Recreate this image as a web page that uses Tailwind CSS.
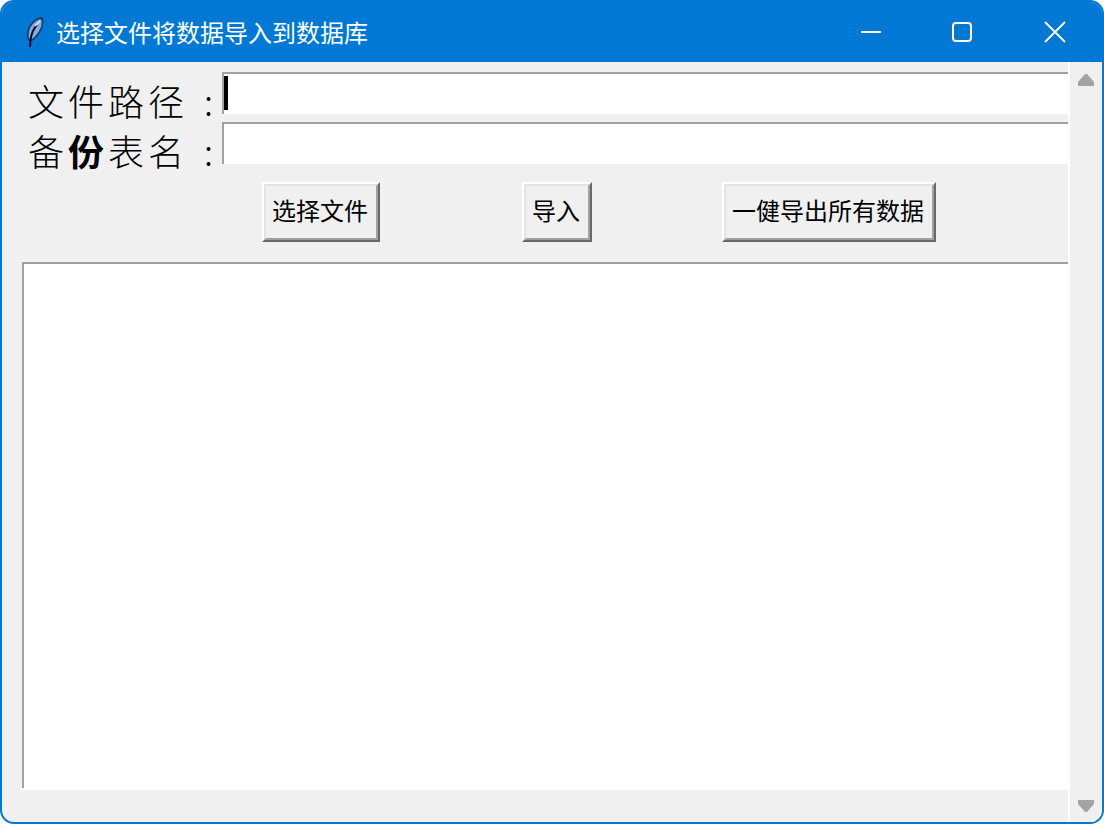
<!DOCTYPE html>
<html lang="zh-CN">
<head>
<meta charset="utf-8">
<script src="https://cdn.jsdelivr.net/npm/@tailwindcss/browser@4"></script>
<title>选择文件将数据导入到数据库</title>
</head>
<body class="bg-white m-0 font-['Noto_Sans_CJK_SC','Noto_Sans',sans-serif]">
<div class="w-[1104px] h-[824px] flex flex-col rounded-[14px] overflow-hidden border-2 border-[#0078d4] bg-[#f0f0f0]">
  <!-- title bar -->
  <header class="h-[60px] -mt-[2px] pt-[2px] box-content bg-[#0078d4] flex items-center text-white shrink-0">
    <svg class="ml-[20px] w-[24px] h-[32px] shrink-0 -mt-[1px]" viewBox="0 0 24 32">
      <path d="M6.5 25 C2.5 18 6 7 16 2 C22 -1 22 4 21 9 C19.5 16 15 22 10 25 Z" fill="#1d3a66"/>
      <path d="M7.5 23 C5 17 8 8 16 4 C20 2 20 5 19.5 9 C18 15 14 20 10 23 Z" fill="#86a8e2"/>
      <path d="M15 9 C12 12 9.5 17 8.5 24 L8 31" fill="none" stroke="#06101f" stroke-width="2"/>
      <path d="M13 10 C15 8 17 6 18 5" stroke="#dbe6f8" stroke-width="1.6" fill="none"/>
    </svg>
    <h1 class="ml-[10px] -mt-[1px] text-[24px] leading-none font-normal whitespace-nowrap">选择文件将数据导入到数据库</h1>
    <div class="ml-auto flex items-center h-full">
      <svg class="w-[20px] h-[20px] mr-[71px] -mt-[1px]" viewBox="0 0 20 20"><rect x="0" y="9" width="20" height="2" fill="#fff"/></svg>
      <svg class="w-[20px] h-[20px] mr-[72px] -mt-[1px]" viewBox="0 0 20 20"><rect x="1" y="1" width="18" height="18" rx="3" fill="none" stroke="#fff" stroke-width="2"/></svg>
      <svg class="w-[22px] h-[22px] mr-[36px] -mt-[1px]" viewBox="0 0 22 22"><path d="M1 1 L21 21 M21 1 L1 21" stroke="#fff" stroke-width="1.8" fill="none"/></svg>
    </div>
  </header>

  <div class="flex-1 flex min-h-0">
    <!-- main column -->
    <main class="w-[1066px] shrink-0 flex flex-col pt-[10px]">
      <div class="flex h-[42px]">
        <label class="w-[220px] shrink-0 pl-[26px] text-[36px] leading-[56px] h-[42px] font-light tracking-[4px] whitespace-nowrap text-black">文件路径<span class="ml-[16px]">:</span></label>
        <div class="flex-1 bg-white border-t-2 border-l-2 border-[#a0a0a0] pt-[2px]">
          <div class="w-[4px] h-[34px] bg-black"></div>
        </div>
      </div>
      <div class="flex h-[42px] mt-[8px]">
        <label class="w-[220px] shrink-0 pl-[26px] text-[36px] leading-[56px] h-[42px] font-light tracking-[4px] whitespace-nowrap text-black">备<span class="font-bold">份</span>表名<span class="ml-[16px]">:</span></label>
        <div class="flex-1 bg-white border-t-2 border-l-2 border-[#a0a0a0]"></div>
      </div>
      <div class="flex mt-[18px] h-[60px] text-[24px] text-black">
        <button class="ml-[260px] w-[118px] h-[60px] bg-[#f0f0f0] border-2 border-t-white border-l-white border-r-[#696969] border-b-[#696969] whitespace-nowrap"><span class="flex items-center justify-center h-full pr-[2px] pb-[4px] border-2 border-t-[#e3e3e3] border-l-[#e3e3e3] border-r-[#a0a0a0] border-b-[#a0a0a0]">选择文件</span></button>
        <button class="ml-[142px] w-[70px] h-[60px] bg-[#f0f0f0] border-2 border-t-white border-l-white border-r-[#696969] border-b-[#696969] whitespace-nowrap"><span class="flex items-center justify-center h-full pr-[2px] pb-[4px] border-2 border-t-[#e3e3e3] border-l-[#e3e3e3] border-r-[#a0a0a0] border-b-[#a0a0a0]">导入</span></button>
        <button class="ml-[130px] w-[214px] h-[60px] bg-[#f0f0f0] border-2 border-t-white border-l-white border-r-[#696969] border-b-[#696969] whitespace-nowrap"><span class="flex items-center justify-center h-full pr-[2px] pb-[4px] border-2 border-t-[#e3e3e3] border-l-[#e3e3e3] border-r-[#a0a0a0] border-b-[#a0a0a0]">一健导出所有数据</span></button>
      </div>
      <div class="ml-[20px] mt-[20px] h-[528px] bg-white border-t-2 border-[#a0a0a0] flex">
        <div class="w-[2px] h-[524px] bg-[#a0a0a0]"></div>
      </div>
    </main>
    <!-- scrollbar -->
    <aside class="ml-[2px] w-[32px] bg-[#f0f0f0] shrink-0 shadow-[-2px_0_0_#ffffff] flex flex-col items-center justify-between pt-[12px] pb-[10px]">
      <svg class="w-[16px] h-[12px]" viewBox="0 0 16 12"><path d="M7 0 L9 0 L16 8 L16 12 L0 12 L0 8 Z" fill="#a3a3a3"/></svg>
      <svg class="w-[16px] h-[12px]" viewBox="0 0 16 12"><path d="M0 0 L16 0 L16 4 L9 12 L7 12 L0 4 Z" fill="#a3a3a3"/></svg>
    </aside>
  </div>
</div>
</body>
</html>
